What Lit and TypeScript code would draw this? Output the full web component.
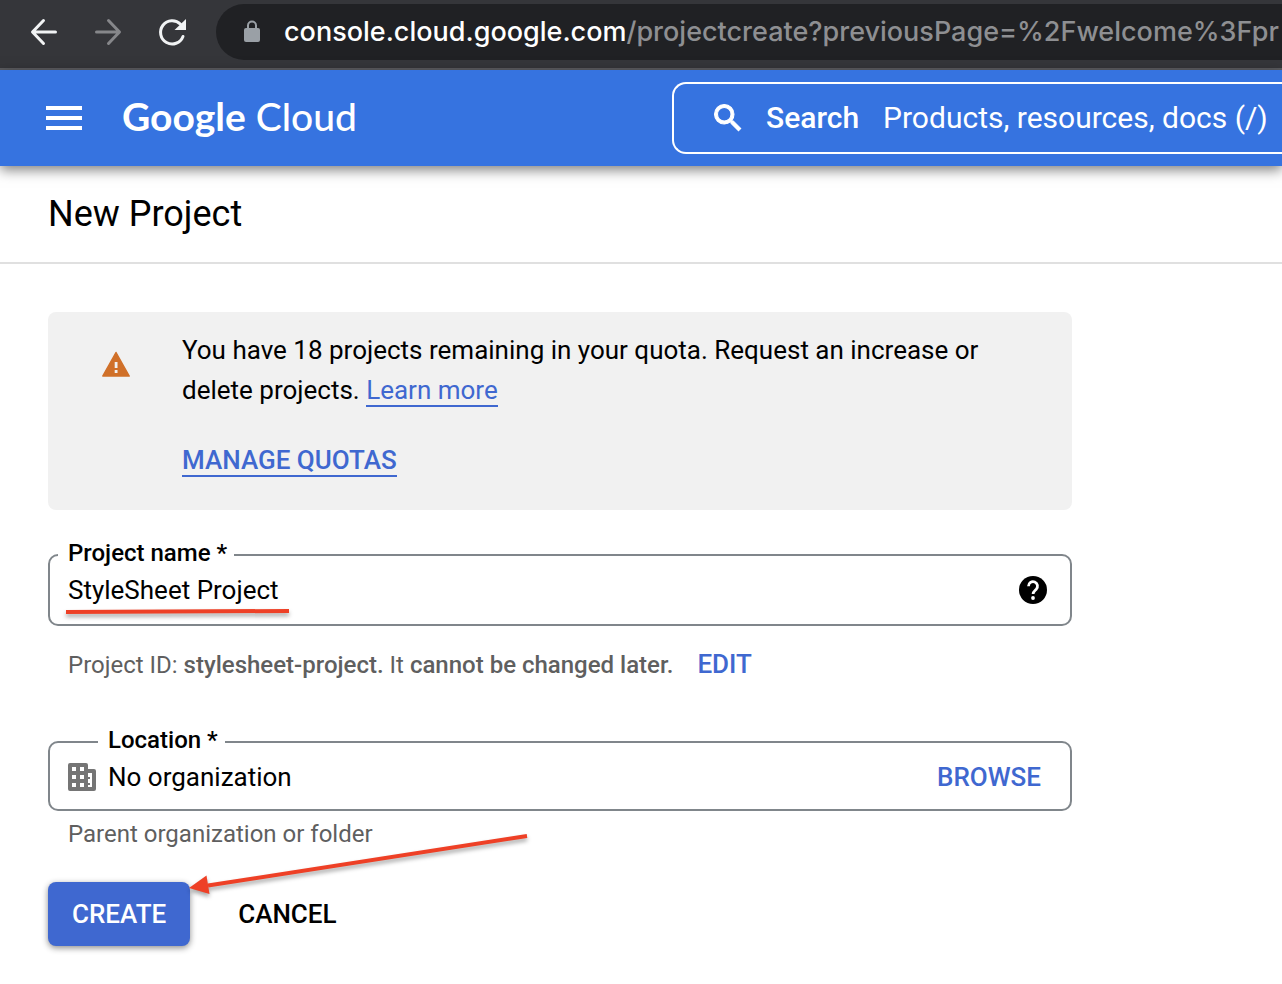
import { LitElement, html, css } from "lit";
import { customElement, property } from "lit/decorators.js";

@customElement("browser-bar")
class BrowserBar extends LitElement {
  static styles = css`
    :host {
      display: flex;
      align-items: flex-start;
      height: 64px;
      padding-top: 4px;
      background: #35363a;
      border-bottom: 2px solid #5c5d61;
      overflow: hidden;
    }
    .nav {
      display: flex;
      align-items: center;
      flex: none;
      gap: 32px;
      height: 56px;
      padding: 0 28px;
    }
    .nav button {
      display: flex;
      width: 32px;
      height: 32px;
      padding: 0;
      border: 0;
      background: none;
      color: #f1f3f4;
    }
    .nav button[disabled] {
      color: #86878a;
    }
    svg {
      display: block;
      flex: none;
    }
    .address {
      display: flex;
      align-items: center;
      flex: 1;
      min-width: 0;
      height: 56px;
      padding-left: 26px;
      gap: 22px;
      border-radius: 28px 0 0 28px;
      background: #202124;
      overflow: hidden;
    }
    .url {
      font: 500 27px/40px Inter, sans-serif;
      color: #8e8f92;
      white-space: nowrap;
    }
    .host {
      color: #fff;
    }
  `;

  render() {
    return html`
      <div class="nav">
        <button aria-label="Back">
          <svg width="32" height="32" viewBox="0 0 32 32" fill="none" stroke="currentColor" stroke-width="3" stroke-linecap="round" stroke-linejoin="round"><path d="M27.500 16H5M15.500 4.500L4.500 16l11 11.500" /></svg>
        </button>
        <button aria-label="Forward" disabled>
          <svg width="32" height="32" viewBox="0 0 32 32" fill="none" stroke="currentColor" stroke-width="3" stroke-linecap="round" stroke-linejoin="round"><path d="M4.500 16H27M16.500 4.500L27.500 16l-11 11.500" /></svg>
        </button>
        <button aria-label="Reload">
          <svg width="32" height="32" viewBox="0 0 32 32"><path d="M27 20.500A11.600 11.600 0 1 1 24.500 8.300" fill="none" stroke="currentColor" stroke-width="3" stroke-linecap="round" /><path d="M30 3v11H18.500z" fill="currentColor" /></svg>
        </button>
      </div>
      <div class="address">
        <svg width="20" height="24" viewBox="0 0 20 24"><rect x="2" y="8" width="16" height="14" rx="2" fill="#9aa0a6" /><path d="M6 9V5.500a4 4 0 0 1 8 0V9" fill="none" stroke="#9aa0a6" stroke-width="2" /></svg>
        <span class="url"><span class="host">console.cloud.google.com</span>/projectcreate?previousPage=%2Fwelcome%3Fpr</span>
      </div>
    `;
  }
}

@customElement("cloud-header")
class CloudHeader extends LitElement {
  static styles = css`
    :host {
      display: flex;
      align-items: center;
      height: 96px;
      padding-left: 46px;
      background: #3673e0;
      color: #fff;
      box-shadow: 0 4px 12px rgba(0, 0, 0, 0.5);
      position: relative;
    }
    .menu {
      display: flex;
      flex: none;
      padding: 0;
      border: 0;
      background: none;
      margin-right: 40px;
    }
    .brand {
      flex: 0 0 550px;
      padding-bottom: 4px;
      font: 500 39px/48px Lato, sans-serif;
      color: inherit;
      text-decoration: none;
      white-space: nowrap;
    }
    .brand b {
      font-weight: 700;
    }
    .search {
      display: flex;
      align-items: center;
      flex: 1;
      min-width: 0;
      height: 72px;
      box-sizing: border-box;
      padding-left: 36px;
      border: 2px solid #fff;
      border-right: 0;
      border-radius: 14px 0 0 14px;
    }
    label {
      font: 500 30px/40px Roboto, sans-serif;
      margin: 0 24px 0 20px;
    }
    input {
      flex: 1;
      min-width: 0;
      padding: 0;
      border: 0;
      outline: 0;
      background: none;
      color: #fff;
      font: 400 30px/40px Roboto, sans-serif;
    }
    input::placeholder {
      color: #fff;
      opacity: 1;
    }
    svg {
      display: block;
      flex: none;
    }
  `;

  render() {
    return html`
      <button class="menu" aria-label="Navigation menu">
        <svg width="36" height="24" viewBox="0 0 36 24" fill="#fff"><path d="M0 0h36v4H0zM0 10h36v4H0zM0 20h36v4H0z" /></svg>
      </button>
      <a class="brand" href="#"><b>Google</b> Cloud</a>
      <div class="search">
        <svg width="36" height="36" viewBox="0 0 24 24" fill="#fff"><path d="M15.500 14h-.79l-.28-.27A6.471 6.471 0 0 0 16 9.500 6.500 6.500 0 1 0 9.500 16c1.610 0 3.090-.59 4.230-1.570l.27.28v.79l5 4.990L20.490 19l-4.990-5zm-6 0C7.010 14 5 11.990 5 9.500S7.010 5 9.500 5 14 7.010 14 9.500 11.990 14 9.500 14z" stroke="#fff" stroke-width=".7" /></svg>
        <label for="q">Search</label>
        <input id="q" placeholder="Products, resources, docs (/)" />
      </div>
    `;
  }
}

@customElement("outlined-field")
class OutlinedField extends LitElement {
  @property() label = "";
  @property() value = "";
  @property() kind = "name";

  static styles = css`
    :host {
      display: block;
    }
    fieldset {
      display: block;
      min-width: 0;
      margin: 0;
      padding: 0 21px 0 18px;
      border: 2px solid #80868b;
      border-radius: 10px;
    }
    legend {
      margin-left: -10px;
      padding: 0 7px 4px 10px;
      font: 500 24px/26px Roboto, sans-serif;
      color: #000;
    }
    .location legend {
      margin-left: 30px;
    }
    .row {
      display: flex;
      align-items: center;
      height: 40px;
      padding-bottom: 14px;
      gap: 12px;
    }
    .location .row {
      padding-bottom: 12px;
    }
    input {
      flex: 1;
      min-width: 0;
      padding: 0;
      border: 0;
      outline: 0;
      background: none;
      color: #000;
      font: 400 26px/40px Roboto, sans-serif;
    }
    button {
      display: flex;
      flex: none;
      padding: 0;
      border: 0;
      background: none;
      color: #3f68d0;
      font: 500 26px/40px Roboto, sans-serif;
    }
    .browse {
      margin-right: 8px;
    }
    svg {
      display: block;
      flex: none;
    }
  `;

  render() {
    const location = this.kind === "location";
    return html`
      <fieldset class=${this.kind}>
        <legend><label for="field">${this.label}</label></legend>
        <div class="row">
          ${location
            ? html`<svg width="28" height="28" viewBox="0 0 28 28"><path d="M2 0h16a2 2 0 0 1 2 2v4h6a2 2 0 0 1 2 2v18a2 2 0 0 1-2 2H2a2 2 0 0 1-2-2V2a2 2 0 0 1 2-2z" fill="#757575" /><path d="M4 4h4v4H4zM12 4h4v4h-4zM4 12h4v4H4zM12 12h4v4h-4zM4 20h4v4H4zM12 20h4v4h-4zM20 10h4v14h-4v-2h2v-2h-2v-4h2v-2h-2z" fill="#fff" /></svg>`
            : ""}
          <input id="field" .value=${this.value} ?readonly=${location} spellcheck="false" />
          ${location
            ? html`<button class="browse">BROWSE</button>`
            : html`<button aria-label="Help">
                <svg width="32" height="32" viewBox="0 0 32 32"><circle cx="16" cy="16" r="14" fill="#000" /><path d="M11.500 12.200a4.500 4.500 0 1 1 7.600 3.200c-1.800 1.700-3 2.300-3 4.600" fill="none" stroke="#fff" stroke-width="2.800" /><circle cx="16" cy="24" r="1.900" fill="#fff" /></svg>
              </button>`}
        </div>
      </fieldset>
    `;
  }
}

@customElement("app-root")
class AppRoot extends LitElement {
  static styles = css`
    :host {
      display: block;
      min-height: 100vh;
      background: #fff;
      color: #000;
      font: 400 26px/40px Roboto, sans-serif;
      overflow: hidden;
    }
    .title {
      margin: 0;
      padding: 24px 48px;
      border-bottom: 2px solid #e0e0e0;
      font: 400 36px/48px Roboto, sans-serif;
    }
    main {
      max-width: 1024px;
      padding: 48px 48px 0;
    }
    .notice {
      display: flex;
      gap: 50px;
      padding: 18px 54px 30px 52px;
      border-radius: 8px;
      background: #f1f1f1;
    }
    .notice p {
      margin: 0 0 30px;
    }
    .warning {
      display: block;
      flex: none;
      margin-top: 18px;
    }
    a {
      color: #3f68d0;
      text-decoration: none;
    }
    .link {
      border-bottom: 2px solid #3f68d0;
    }
    .strong {
      font-weight: 500;
    }
    .name {
      position: relative;
      margin-top: 30px;
    }
    .place {
      margin-top: 42px;
    }
    .underline {
      position: absolute;
      left: 14px;
      top: 60px;
    }
    .hint {
      margin: 0;
      padding: 18px 20px 0;
      font-size: 24px;
      color: #5f5f5f;
    }
    .hint b {
      font-weight: 500;
    }
    .place .hint {
      padding-top: 3px;
    }
    button {
      padding: 0;
      border: 0;
      background: none;
      color: inherit;
      font: 500 26px/40px Roboto, sans-serif;
    }
    .edit {
      margin-left: 18px;
      color: #3f68d0;
    }
    .actions {
      display: flex;
      align-items: center;
      gap: 48px;
      margin-top: 28px;
      position: relative;
    }
    .create {
      padding: 12px 24px;
      border-radius: 8px;
      background: #3f68d0;
      color: #fff;
      box-shadow: 0 2px 6px rgba(0, 0, 0, 0.45);
    }
    .arrow {
      position: absolute;
      left: 140px;
      top: -52px;
      pointer-events: none;
    }
    .underline,
    .arrow {
      overflow: visible;
      filter: drop-shadow(0 3px 2px rgba(0, 0, 0, 0.35));
    }
  `;

  render() {
    return html`
      <browser-bar></browser-bar>
      <cloud-header></cloud-header>
      <h1 class="title">New Project</h1>
      <main>
        <section class="notice">
          <svg class="warning" width="32" height="32" viewBox="0 0 32 32"><path d="M16 4.500L29.200 28H2.800z" fill="#d07029" stroke="#d07029" stroke-width="1.500" stroke-linejoin="round" /><path d="M14.700 14h2.800v6h-2.800zM14.700 22h2.800v3h-2.800z" fill="#f1f1f1" /></svg>
          <div>
            <p>You have 18 projects remaining in your quota. Request an increase or delete projects. <a class="link" href="#">Learn more</a></p>
            <a class="link strong" href="#">MANAGE QUOTAS</a>
          </div>
        </section>
        <div class="name">
          <outlined-field label="Project name *" value="StyleSheet Project"></outlined-field>
          <svg class="underline" width="232" height="16" viewBox="0 0 232 16"><path d="M4 12L227 11" stroke="#ee4026" stroke-width="4" /></svg>
          <p class="hint">Project ID: <b>stylesheet-project.</b> It <b>cannot be changed later.</b> <button class="edit">EDIT</button></p>
        </div>
        <div class="place">
          <outlined-field kind="location" label="Location *" value="No organization"></outlined-field>
          <p class="hint">Parent organization or folder</p>
        </div>
        <div class="actions">
          <button class="create">CREATE</button>
          <button>CANCEL</button>
          <svg class="arrow" width="344" height="70" viewBox="0 0 344 70"><path d="M339 6L20 55.500" stroke="#ee4026" stroke-width="4" fill="none" /><path d="M1 58L18.500 45.500L21.500 64z" fill="#ee4026" /></svg>
        </div>
      </main>
    `;
  }
}
